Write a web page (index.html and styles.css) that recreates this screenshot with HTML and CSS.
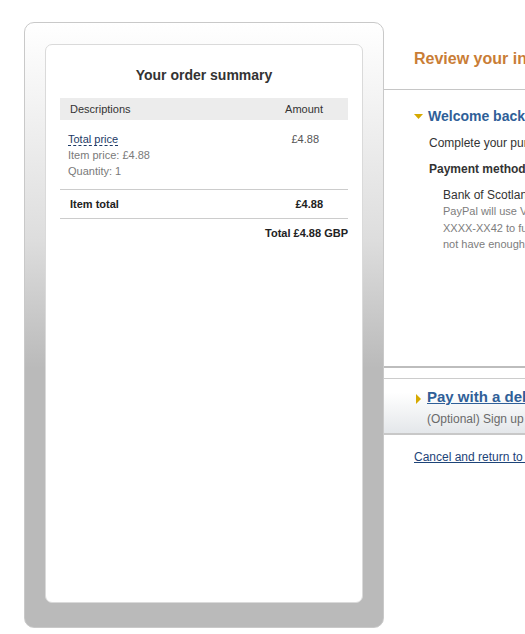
FILE: index.html
```html
<!DOCTYPE html>
<html lang="en">
<head>
<meta charset="utf-8">
<title>Review your information</title>
<link rel="stylesheet" href="styles.css">
</head>
<body>
<div class="page">
  <aside class="summary-panel">
    <div class="summary-card">
      <h2 class="summary-title">Your order summary</h2>
      <table class="summary-table">
        <thead>
          <tr class="head-row">
            <th class="col-desc">Descriptions</th>
            <th class="col-amt">Amount</th>
          </tr>
        </thead>
        <tbody>
          <tr class="item-row">
            <td class="item-desc">
              <span class="item-name">Total price</span><br>
              <span class="item-meta">Item price: £4.88</span><br>
              <span class="item-meta">Quantity: 1</span>
            </td>
            <td class="item-amt">£4.88</td>
          </tr>
          <tr class="total-row">
            <td class="col-desc">Item total</td>
            <td class="col-amt">£4.88</td>
          </tr>
          <tr class="grand-row">
            <td colspan="2">Total £4.88 GBP</td>
          </tr>
        </tbody>
      </table>
    </div>
  </aside>

  <main class="review">
    <h1 class="review-title">Review your information</h1>

    <section class="welcome">
      <div class="welcome-title">
        <svg class="tri-down" width="9" height="5" viewBox="0 0 9 5"><polygon points="0,0 9,0 4.5,5" fill="#d6a900"/></svg>
        <span>Welcome back</span>
      </div>
      <p class="lead">Complete your purchase</p>
      <p class="label">Payment method</p>
      <div class="method">
        <p class="method-name">Bank of Scotland</p>
        <p class="method-note">PayPal will use Visa<br>XXXX-XX42 to fund<br>not have enough</p>
      </div>
    </section>

    <section class="pay">
      <div class="pay-title">
        <svg class="tri-right" width="5" height="10" viewBox="0 0 5 10"><polygon points="0,0 5,5 0,10" fill="#d6a900"/></svg>
        <a href="#" class="pay-link">Pay with a debit or credit card</a>
      </div>
      <p class="pay-note">(Optional) Sign up to PayPal</p>
    </section>

    <a href="#" class="cancel">Cancel and return to an online store</a>
  </main>
</div>
</body>
</html>
```
FILE: styles.css
```css
html, body {
  margin: 0;
  padding: 0;
  background: #fff;
  overflow: hidden;
}

body {
  font-family: "Liberation Sans", Arial, sans-serif;
  color: #333;
}

.page {
  display: flex;
  align-items: flex-start;
  width: 525px;
}

/* Left order summary */
.summary-panel {
  flex: 0 0 360px;
  box-sizing: border-box;
  width: 360px;
  height: 606px;
  margin: 22px 0 0 24px;
  padding: 21px 20px 24px 20px;
  border: 1px solid #c9c9c9;
  border-radius: 10px;
  background: linear-gradient(to bottom, #ffffff 0px, #f6f6f6 60px, #dddddd 218px, #bababa 345px, #bababa 100%);
  display: flex;
  flex-direction: column;
}

.summary-card {
  flex: 1;
  box-sizing: border-box;
  background: #fff;
  border: 1px solid #dadada;
  border-radius: 7px;
  padding: 21px 14px 0 14px;
}

.summary-title {
  margin: 0 0 14px 0;
  font-size: 14px;
  line-height: 18px;
  font-weight: bold;
  text-align: center;
  color: #333;
}

.summary-table {
  width: 288px;
  border-collapse: collapse;
  font-size: 11px;
  line-height: 16px;
}

.summary-table th,
.summary-table td {
  padding: 0;
}

.head-row th {
  height: 22px;
  background: #ececec;
  font-weight: normal;
  color: #333;
}

.col-desc {
  text-align: left;
  padding-left: 10px !important;
}

.col-amt {
  text-align: right;
  padding-right: 25px !important;
}

.item-row td {
  padding-top: 11px;
  padding-bottom: 10px;
  border-bottom: 1px solid #cccccc;
  vertical-align: top;
}

.item-desc {
  padding-left: 8px !important;
}

.item-name {
  color: #1d3a66;
  border-bottom: 1px dashed #1d3a66;
}

.item-meta {
  color: #7a7a7a;
}

.item-amt {
  text-align: right;
  padding-right: 29px !important;
  color: #555;
}

.total-row td {
  height: 28px;
  border-bottom: 1px solid #cccccc;
  font-weight: bold;
  color: #222;
}

.grand-row td {
  padding-top: 6px !important;
  text-align: right;
  font-weight: bold;
  color: #222;
}

/* Right review column */
.review {
  flex: 1;
  min-width: 0;
  overflow: hidden;
  white-space: nowrap;
}

.review p {
  margin: 0;
}

.review-title {
  margin: 0;
  padding: 49px 0 20px 30px;
  font-size: 16px;
  line-height: 20px;
  font-weight: bold;
  color: #c97d36;
  border-bottom: 1px solid #c6c6c6;
}

.welcome {
  box-sizing: border-box;
  height: 278px;
  padding: 17px 0 0 30px;
  border-bottom: 2px solid #bdbdbd;
}

.welcome-title {
  display: flex;
  align-items: center;
  gap: 5px;
  font-size: 14px;
  line-height: 18px;
  font-weight: bold;
  color: #2f5f98;
}

.tri-down {
  display: block;
  flex: none;
}

.lead {
  margin-top: 10px !important;
  padding-left: 15px;
  font-size: 12px;
  line-height: 16px;
  color: #333;
}

.label {
  margin-top: 10px !important;
  padding-left: 15px;
  font-size: 12px;
  line-height: 16px;
  font-weight: bold;
  color: #333;
}

.method {
  margin-top: 10px;
  padding-left: 29px;
}

.method-name {
  font-size: 12px;
  line-height: 16px;
  color: #333;
}

.method-note {
  font-size: 11px;
  line-height: 16.5px;
  color: #7d7d7d;
}

.pay {
  margin-top: 10px;
  padding: 9px 0 6px 0;
  border-top: 1px solid #cccccc;
  border-bottom: 2px solid #c8c8c8;
  background: linear-gradient(to bottom, #ffffff 0%, #ffffff 25%, #e4e7ea 100%);
}

.pay-title {
  display: flex;
  align-items: center;
  gap: 6px;
  padding-left: 32px;
  font-size: 15px;
  line-height: 18px;
  font-weight: bold;
}

.tri-right {
  display: block;
  flex: none;
  margin-top: 4px;
}

.pay-link {
  color: #2f5f98;
  text-decoration: underline;
}

.pay-note {
  margin-top: 5px !important;
  padding-left: 43px;
  font-size: 12px;
  line-height: 16px;
  color: #6a6a6a;
}

.cancel {
  display: block;
  margin-top: 14px;
  padding-left: 30px;
  font-size: 12px;
  line-height: 16px;
  color: #1d4478;
  text-decoration: underline;
}
```
